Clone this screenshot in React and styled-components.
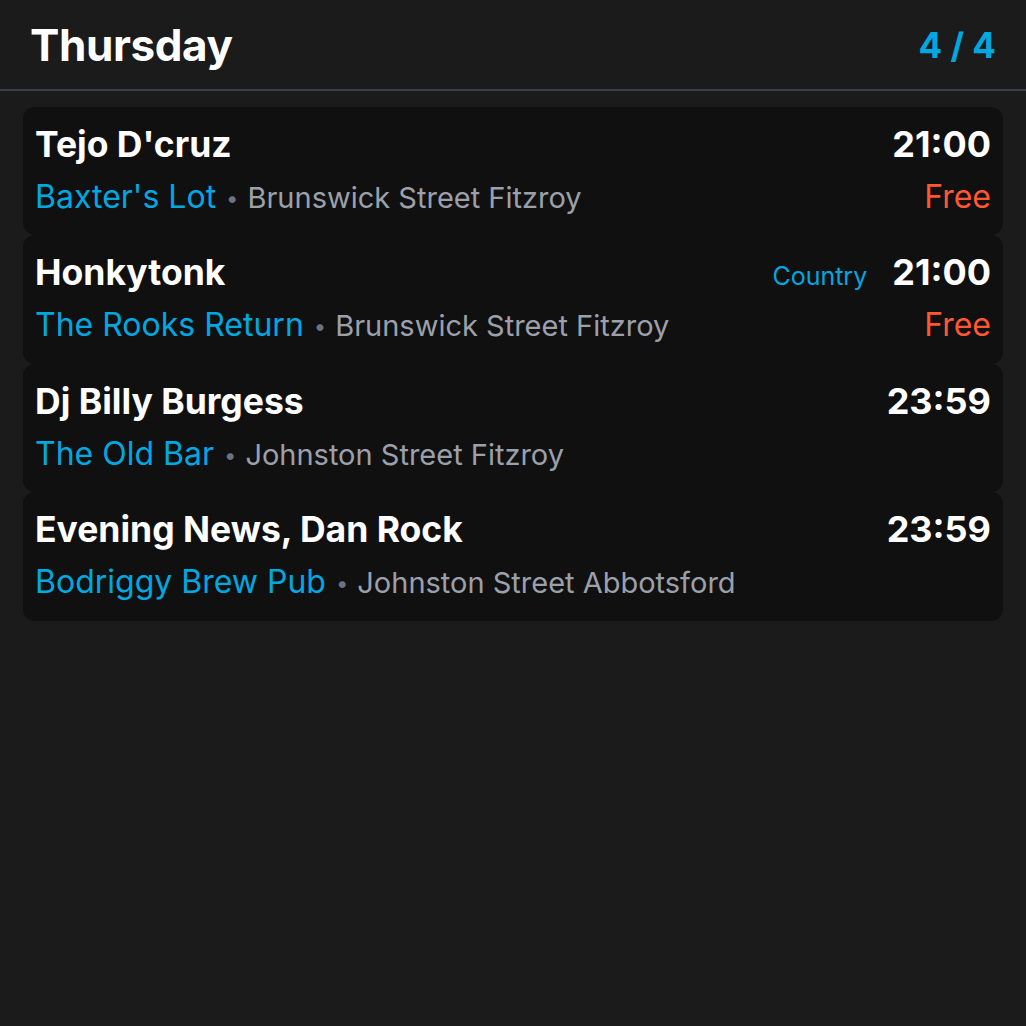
import React from "react";
import styled, { createGlobalStyle } from "styled-components";

const Global = createGlobalStyle`
  html, body { margin: 0; padding: 0; background: #1b1b1b; }
  body { font-family: Inter, "Noto Sans", "Liberation Sans", sans-serif; color: #fff; min-height: 1026px; }
  * { box-sizing: border-box; }
`;

const Page = styled.div`
  background: #1b1b1b;
  min-height: 1026px;
`;

const Header = styled.header`
  display: flex;
  align-items: center;
  justify-content: space-between;
  height: 91px;
  padding: 0 30px 0 30px;
  border-bottom: 2px solid #3a3f49;
`;

const Day = styled.h1`
  margin: 0;
  font-size: 44px;
  font-weight: 700;
  letter-spacing: -0.4px;
  color: #fff;
`;

const Count = styled.div`
  font-size: 35px;
  font-weight: 700;
  color: #00a8e0;
`;

const List = styled.div`
  display: flex;
  flex-direction: column;
  padding: 16px 23px;
`;

const Card = styled.div`
  display: grid;
  grid-template-columns: 1fr auto;
  grid-template-rows: 51px 48px;
  row-gap: 3px;
  height: 128.4px;
  padding: 12px 12px 14px;
  background: #101010;
  border-radius: 12px;
`;

const Title = styled.div`
  font-size: 35.5px;
  line-height: 51px;
  font-weight: 700;
  color: #fff;
  white-space: nowrap;
`;

const Right = styled.div`
  display: flex;
  align-items: baseline;
  justify-content: flex-end;
  gap: 25px;
`;

const Genre = styled.span`
  font-size: 25px;
  line-height: 51px;
  color: #00a8e0;
`;

const Time = styled.span`
  font-size: 36px;
  line-height: 51px;
  font-weight: 700;
  color: #fff;
`;

const Sub = styled.div`
  display: flex;
  align-items: baseline;
  font-size: 32px;
  line-height: 48px;
  white-space: nowrap;
`;

const Venue = styled.span`
  color: #00a8e0;
`;

const Dot = styled.span`
  color: #6b7280;
  font-size: 22px;
  margin: 0 9px 0 10px;
  position: relative;
  top: -2px;
`;

const Place = styled.span`
  color: #9ca0aa;
  font-size: 29px;
`;

const Price = styled.div`
  font-size: 32px;
  line-height: 48px;
  color: #ff5733;
  text-align: right;
`;

const events = [
  { title: "Tejo D'cruz", time: "21:00", venue: "Baxter's Lot", place: "Brunswick Street Fitzroy", price: "Free" },
  { title: "Honkytonk", genre: "Country", time: "21:00", venue: "The Rooks Return", place: "Brunswick Street Fitzroy", price: "Free" },
  { title: "Dj Billy Burgess", time: "23:59", venue: "The Old Bar", place: "Johnston Street Fitzroy" },
  { title: "Evening News, Dan Rock", time: "23:59", venue: "Bodriggy Brew Pub", place: "Johnston Street Abbotsford" },
];

export default function App() {
  return (
    <Page>
      <Global />
      <Header>
        <Day>Thursday</Day>
        <Count>4 / 4</Count>
      </Header>
      <List>
        {events.map((e) => (
          <Card key={e.title}>
            <Title>{e.title}</Title>
            <Right>
              {e.genre && <Genre>{e.genre}</Genre>}
              <Time>{e.time}</Time>
            </Right>
            <Sub>
              <Venue>{e.venue}</Venue>
              <Dot>•</Dot>
              <Place>{e.place}</Place>
            </Sub>
            <Price>{e.price || ""}</Price>
          </Card>
        ))}
      </List>
    </Page>
  );
}
